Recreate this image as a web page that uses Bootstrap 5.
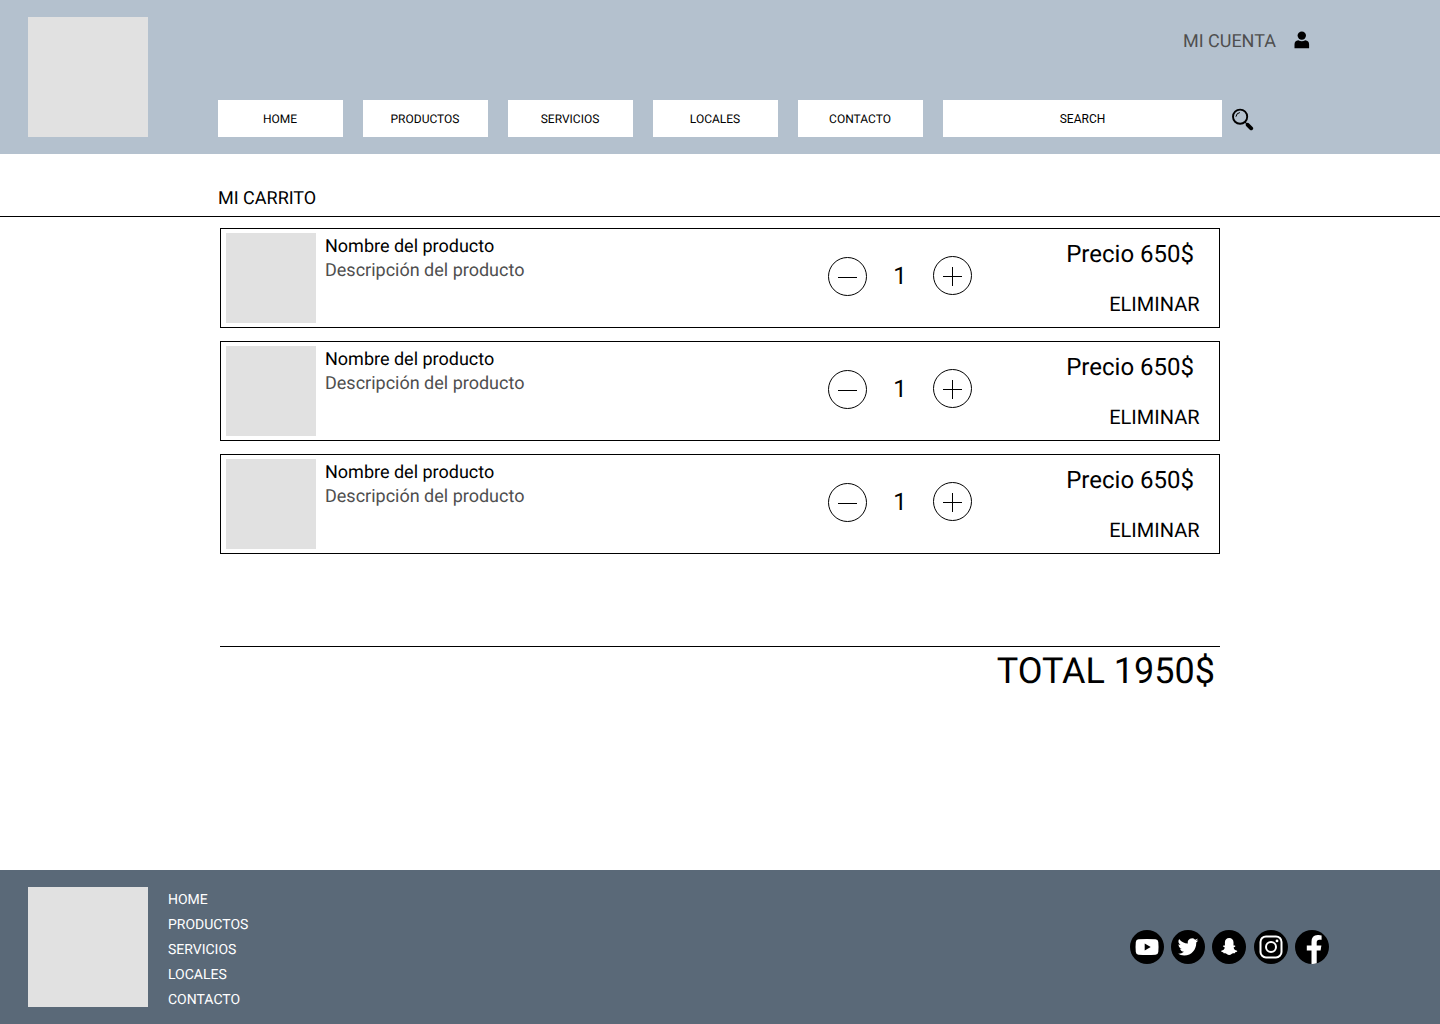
<!DOCTYPE html>
<html lang="es">
<head>
<meta charset="utf-8">
<meta name="viewport" content="width=device-width, initial-scale=1">
<title>Mi carrito</title>
<link href="https://cdn.jsdelivr.net/npm/bootstrap@5.3.0/dist/css/bootstrap.min.css" rel="stylesheet">
<style>
  body { font-family: Roboto, "Liberation Sans", sans-serif; color: #000; background: #fff; line-height: 1.172; text-rendering: geometricPrecision; }
  a, a:hover { color: inherit; text-decoration: none; }
  .site-header { height: 154px; background: #b4c1ce; padding: 17px 187px 17px 28px; }
  .logo-box { width: 120px; height: 120px; background: #e1e1e1; }
  .header-main { margin-left: 70px; }
  .account { font-size: 18px; color: #4f4f4f; gap: 17px; margin: 14px -56px 0 0; }
  .account svg { margin: -2px 0 2px; }
  .menu-bar { gap: 20px; }
  .menu-item { width: 125px; height: 37px; padding: 1px 1px 0 0; background: #fff; font-size: 12px; line-height: 14px; }
  .search-box { width: 279px; height: 37px; font-size: 12px; line-height: 14px; background: #fff; border: 0; border-radius: 0; padding: 0; }
  .search-box::placeholder { color: #000; opacity: 1; }
  .search-btn { margin: 2px 0 0 -10px; line-height: 0; }
  .page-title { height: 63px; padding: 34px 0 0 218px; font-size: 18px; font-weight: 400; line-height: 21px; border-bottom: 1px solid #000; }
  .cart-wrap { width: 1000px; padding-top: 11px; }
  .cart-items { gap: 13px; }
  .cart-item { height: 100px; border: 1px solid #000; padding: 4px 0 0 5px; }
  .thumb { width: 90px; height: 90px; background: #e1e1e1; }
  .item-info { width: 512px; padding: 2px 0 0 9px; font-size: 18px; line-height: 24px; }
  .item-desc { color: #4f4f4f; }
  .qty { width: 144px; padding-top: 23px; }
  .qty-num { width: 66px; font-size: 24px; line-height: 40px; }
  .item-side { padding-top: 7px; font-size: 20px; line-height: 24px; }
  .item-price { font-size: 24px; line-height: 28px; margin: 0 25px 24px 0; }
  .item-remove { margin-right: 19.5px; }
  .cart-total { height: 224px; margin-top: 92px; border-top: 1px solid #000; padding: 2px 5px 0 0; font-size: 36px; line-height: 44px; }
  .site-footer { height: 154px; background: #5a6978; padding: 17px 111px 0 28px; color: #fff; }
  .footer-links { margin: 1px 0 0 20px; font-size: 14px; line-height: 25px; }
  .social { gap: 7px; padding-top: 43px; }
  .insta { margin-left: 1px; }
  svg { display: block; }
</style>
</head>
<body>
<header class="site-header d-flex">
  <a href="#" class="logo-box flex-shrink-0" aria-label="Logo"></a>
  <div class="header-main flex-grow-1 d-flex flex-column justify-content-between">
    <a href="#" class="account d-flex justify-content-end align-items-center">MI CUENTA
      <svg width="17" height="20" viewBox="0 0 17 20"><circle cx="8.800" cy="5.600" r="4.200"/><path d="M1.500 18.300v-3.700q0-4 3.800-4.300 3.500 1.700 7 0 3.800.3 3.800 4.300v3.700z"/></svg>
    </a>
    <nav class="menu-bar d-flex align-items-center">
      <a href="#" class="menu-item d-flex align-items-center justify-content-center">HOME</a>
      <a href="#" class="menu-item d-flex align-items-center justify-content-center">PRODUCTOS</a>
      <a href="#" class="menu-item d-flex align-items-center justify-content-center">SERVICIOS</a>
      <a href="#" class="menu-item d-flex align-items-center justify-content-center">LOCALES</a>
      <a href="#" class="menu-item d-flex align-items-center justify-content-center">CONTACTO</a>
      <input class="search-box form-control text-center" type="text" placeholder="SEARCH" aria-label="Search">
      <a href="#" class="search-btn" aria-label="Search">
        <svg width="22" height="23" viewBox="0 0 22 23"><g fill="none" stroke="#000" stroke-linecap="round"><circle cx="8.100" cy="8.700" r="7.100" stroke-width="1.900"/><path d="M4 8.300Q4.400 5 7.500 4.600" stroke-width="1"/><path d="M13.300 14.400l2 2" stroke-width="1.200"/><path d="M15.700 16.800l3.500 3.500" stroke-width="3.900"/></g></svg>
      </a>
    </nav>
  </div>
</header>

<main>
  <h1 class="page-title m-0">MI CARRITO</h1>
  <div class="cart-wrap mx-auto">
    <div class="cart-items d-flex flex-column">
      <article class="cart-item d-flex">
        <div class="thumb"></div>
        <div class="item-info"><div>Nombre del producto</div><div class="item-desc">Descripción del producto</div></div>
        <div class="qty d-flex align-items-start">
          <svg width="39" height="40" viewBox="0 0 39 40"><circle cx="19.500" cy="20.500" r="19" fill="none" stroke="#000"/><path d="M10 21.500h19" stroke="#000"/></svg>
          <span class="qty-num text-center">1</span>
          <svg width="39" height="39" viewBox="0 0 39 39"><circle cx="19.500" cy="19.500" r="19" fill="none" stroke="#000"/><path d="M10 20.500h19M19.500 11v19" stroke="#000"/></svg>
        </div>
        <div class="item-side flex-grow-1 text-end"><div class="item-price">Precio 650$</div><a href="#" class="item-remove d-block">ELIMINAR</a></div>
      </article>
      <article class="cart-item d-flex">
        <div class="thumb"></div>
        <div class="item-info"><div>Nombre del producto</div><div class="item-desc">Descripción del producto</div></div>
        <div class="qty d-flex align-items-start">
          <svg width="39" height="40" viewBox="0 0 39 40"><circle cx="19.500" cy="20.500" r="19" fill="none" stroke="#000"/><path d="M10 21.500h19" stroke="#000"/></svg>
          <span class="qty-num text-center">1</span>
          <svg width="39" height="39" viewBox="0 0 39 39"><circle cx="19.500" cy="19.500" r="19" fill="none" stroke="#000"/><path d="M10 20.500h19M19.500 11v19" stroke="#000"/></svg>
        </div>
        <div class="item-side flex-grow-1 text-end"><div class="item-price">Precio 650$</div><a href="#" class="item-remove d-block">ELIMINAR</a></div>
      </article>
      <article class="cart-item d-flex">
        <div class="thumb"></div>
        <div class="item-info"><div>Nombre del producto</div><div class="item-desc">Descripción del producto</div></div>
        <div class="qty d-flex align-items-start">
          <svg width="39" height="40" viewBox="0 0 39 40"><circle cx="19.500" cy="20.500" r="19" fill="none" stroke="#000"/><path d="M10 21.500h19" stroke="#000"/></svg>
          <span class="qty-num text-center">1</span>
          <svg width="39" height="39" viewBox="0 0 39 39"><circle cx="19.500" cy="19.500" r="19" fill="none" stroke="#000"/><path d="M10 20.500h19M19.500 11v19" stroke="#000"/></svg>
        </div>
        <div class="item-side flex-grow-1 text-end"><div class="item-price">Precio 650$</div><a href="#" class="item-remove d-block">ELIMINAR</a></div>
      </article>
    </div>
    <div class="cart-total text-end">TOTAL 1950$</div>
  </div>
</main>

<footer class="site-footer d-flex align-items-start">
  <div class="logo-box flex-shrink-0"></div>
  <ul class="footer-links list-unstyled">
    <li><a href="#">HOME</a></li><li><a href="#">PRODUCTOS</a></li><li><a href="#">SERVICIOS</a></li><li><a href="#">LOCALES</a></li><li><a href="#">CONTACTO</a></li>
  </ul>
  <div class="social d-flex ms-auto">
    <a href="#" aria-label="YouTube"><svg width="34" height="34" viewBox="0 0 34 34"><circle cx="17" cy="17" r="17"/><path fill="#fff" d="M8.500 9.300q8.500-.8 17 0 2.600.2 2.800 2.700.5 5 0 10-.2 2.500-2.800 2.700-8.500.8-17 0-2.400-.2-2.700-2.700-.5-5 0-10 .3-2.500 2.700-2.700z"/><path d="M14.700 13.400v7.200l6-3.600z"/></svg></a>
    <a href="#" aria-label="Twitter"><svg width="34" height="34" viewBox="0 0 34 34"><circle cx="17" cy="17" r="17"/><path transform="translate(6.700 5.600) scale(1.290 1.330)" fill="#fff" d="M5.026 15c6.038 0 9.341-5.003 9.341-9.334 0-.14 0-.282-.006-.422A6.685 6.685 0 0 0 16 3.542a6.658 6.658 0 0 1-1.889.518 3.301 3.301 0 0 0 1.447-1.817 6.533 6.533 0 0 1-2.087.793A3.286 3.286 0 0 0 7.875 6.030a9.325 9.325 0 0 1-6.767-3.429 3.289 3.289 0 0 0 1.018 4.382A3.323 3.323 0 0 1 .64 6.575v.045a3.288 3.288 0 0 0 2.632 3.218 3.203 3.203 0 0 1-.865.115 3.230 3.230 0 0 1-.614-.057 3.283 3.283 0 0 0 3.067 2.277A6.588 6.588 0 0 1 .78 13.580a6.320 6.320 0 0 1-.78-.045A9.344 9.344 0 0 0 5.026 15z"/></svg></a>
    <a href="#" aria-label="Snapchat"><svg width="34" height="34" viewBox="0 0 34 34"><circle cx="17" cy="17" r="17"/><path fill="#fff" d="M17.200 8c2.500 0 4.300 1.700 4.300 4.200v3.300l1.300-.1c.7.200.7.900.1 1.300l-1.300.8c.4 1.800 1.500 2.800 3.500 3.300.5.500 0 1.200-1.900 1.400l-.4 1.100c-2-.2-2.500.1-3.200.7-1.400 1.200-3.400 1.200-4.800 0-.7-.6-1.200-.9-3.200-.7l-.4-1.100c-1.900-.2-2.400-.9-1.900-1.400 2-.5 3.100-1.500 3.500-3.300l-1.300-.8c-.6-.4-.6-1.100.1-1.300l1.300.1v-3.300c0-2.500 1.800-4.200 4.300-4.200z"/></svg></a>
    <a href="#" class="insta" aria-label="Instagram"><svg width="34" height="34" viewBox="0 0 34 34"><circle cx="17" cy="17" r="17"/><g fill="none" stroke="#fff" stroke-width="2"><rect x="6.500" y="6.400" width="21" height="21" rx="5.500"/><circle cx="17" cy="17" r="5"/></g><circle cx="23" cy="10.900" r="1.400" fill="#fff"/></svg></a>
    <a href="#" aria-label="Facebook"><svg width="34" height="34" viewBox="0 0 34 34"><circle cx="17" cy="17" r="17"/><path fill="#fff" d="M16.500 33.900V20.500h-4.700v-5h4.700v-3.800q0-6.200 6.200-6.600 2-.1 3.900.3v4.400h-2.400q-2.500 0-2.500 2.500v3.200h4.700l-.8 5h-3.900V33.300q-2.400.8-5.200.6z"/></svg></a>
  </div>
</footer>
<script src="https://cdn.jsdelivr.net/npm/bootstrap@5.3.0/dist/js/bootstrap.bundle.min.js"></script>
</body>
</html>
